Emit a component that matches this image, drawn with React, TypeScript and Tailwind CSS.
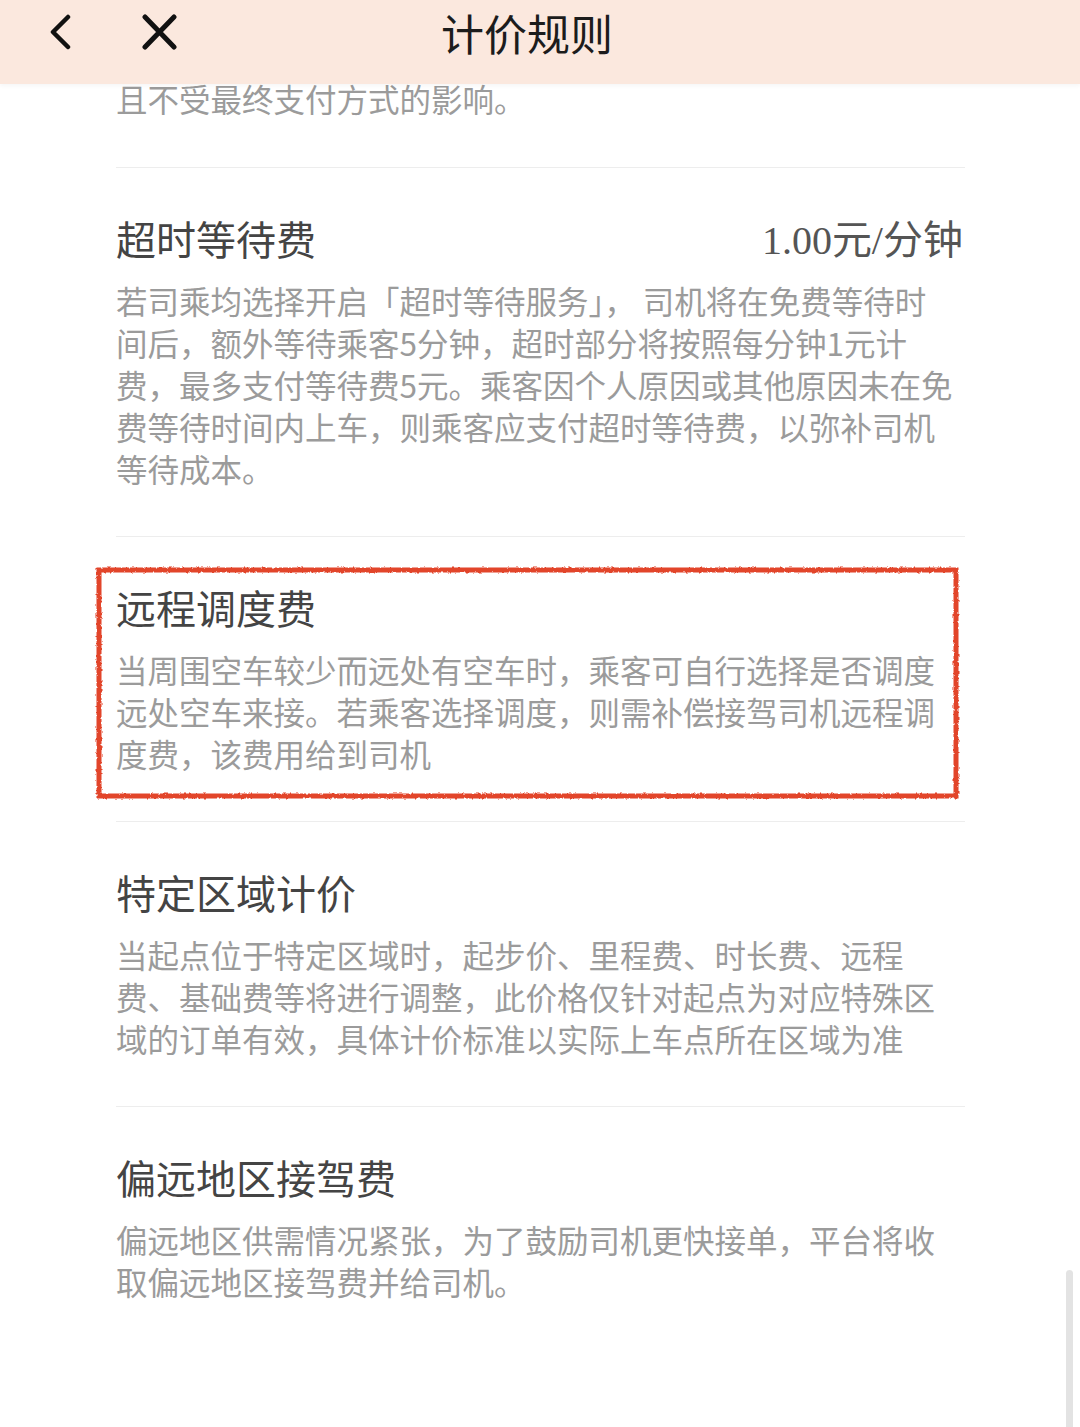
import React from "react";

type Section = {
  title: string;
  price?: string;
  lines: string[];
  marked?: boolean;
};

const sections: Section[] = [
  {
    title: "超时等待费",
    price: "1.00元/分钟",
    lines: [
      "若司乘均选择开启「超时等待服务」， 司机将在免费等待时",
      "间后，额外等待乘客5分钟，超时部分将按照每分钟1元计",
      "费，最多支付等待费5元。乘客因个人原因或其他原因未在免",
      "费等待时间内上车，则乘客应支付超时等待费，以弥补司机",
      "等待成本。",
    ],
  },
  {
    title: "远程调度费",
    marked: true,
    lines: [
      "当周围空车较少而远处有空车时，乘客可自行选择是否调度",
      "远处空车来接。若乘客选择调度，则需补偿接驾司机远程调",
      "度费，该费用给到司机",
    ],
  },
  {
    title: "特定区域计价",
    lines: [
      "当起点位于特定区域时，起步价、里程费、时长费、远程",
      "费、基础费等将进行调整，此价格仅针对起点为对应特殊区",
      "域的订单有效，具体计价标准以实际上车点所在区域为准",
    ],
  },
  {
    title: "偏远地区接驾费",
    lines: [
      "偏远地区供需情况紧张，为了鼓励司机更快接单，平台将收",
      "取偏远地区接驾费并给司机。",
    ],
  },
];

const font = { fontFamily: '"Noto Sans CJK SC", "Noto Sans", sans-serif' };

function MarkerBox() {
  return (
    <svg className="absolute top-[29px] left-[-21px] w-[865px] h-[234px] pointer-events-none" viewBox="0 0 865 234">
      <defs>
        <filter id="rough">
          <feTurbulence type="fractalNoise" baseFrequency="0.35" numOctaves="2" seed="3" />
          <feDisplacementMap in="SourceGraphic" scale="3" />
        </filter>
      </defs>
      <rect x="4" y="4" width="857" height="226" fill="none" stroke="#e2442c" strokeWidth="5" filter="url(#rough)" />
    </svg>
  );
}

function Block({ s }: { s: Section }) {
  return (
    <div className="relative border-b border-[#ededed] last:border-b-0 pt-[46px] pb-[47px]">
      {s.marked && <MarkerBox />}
      <div className="flex items-center justify-between h-[48px]">
        <span className="text-[40px] text-[#444444]">{s.title}</span>
        {s.price && (
          <span
            className="relative top-[3px] text-[40px] text-[#555555] pr-[2px]"
            style={{ fontFamily: '"Liberation Serif", "Noto Sans CJK SC", serif' }}
          >
            {s.price}
          </span>
        )}
      </div>
      <div className="mt-[17px] text-[31.5px] leading-[42px] text-[#9b9b9b]">
        {s.lines.map((l) => (
          <div key={l} className="whitespace-nowrap">
            {l}
          </div>
        ))}
      </div>
    </div>
  );
}

export default function App() {
  return (
    <div className="relative w-[1080px] h-[1427px] bg-white overflow-hidden" style={font}>
      {/* top bar */}
      <header className="absolute top-0 left-0 right-0 z-10 h-[84px] bg-[#fbe8de] shadow-[0_2px_4px_rgba(0,0,0,0.04)]">
        <div className="relative h-[64px] flex items-center">
          <svg className="absolute left-[46px] top-[14px] w-[28px] h-[36px]" viewBox="0 0 28 36">
            <path d="M22 3 L7 18 L22 33" fill="none" stroke="#111" strokeWidth="4.5" strokeLinecap="round" strokeLinejoin="round" />
          </svg>
          <svg className="absolute left-[141px] top-[14px] w-[38px] h-[36px]" viewBox="0 0 38 36">
            <path d="M4 3 L33 33 M33 3 L4 33" fill="none" stroke="#111" strokeWidth="5" strokeLinecap="round" />
          </svg>
          <div className="flex-1 flex justify-center pr-[26px]">
            <span className="text-[43px] leading-[48px] text-[#1c1c1c]">计价规则</span>
          </div>
        </div>
      </header>

      <main className="pt-[77px] pl-[116px] pr-[115px]">
        <div className="border-b border-[#ededed] pb-[48px]">
          <div className="text-[31.5px] leading-[42px] text-[#9b9b9b] whitespace-nowrap">
            且不受最终支付方式的影响。
          </div>
        </div>
        {sections.map((s) => (
          <Block key={s.title} s={s} />
        ))}
      </main>

      {/* scroll indicator */}
      <div className="absolute left-[1066px] top-[1270px] w-[7px] h-[170px] rounded-full bg-[#e3e3e3]" />
    </div>
  );
}
